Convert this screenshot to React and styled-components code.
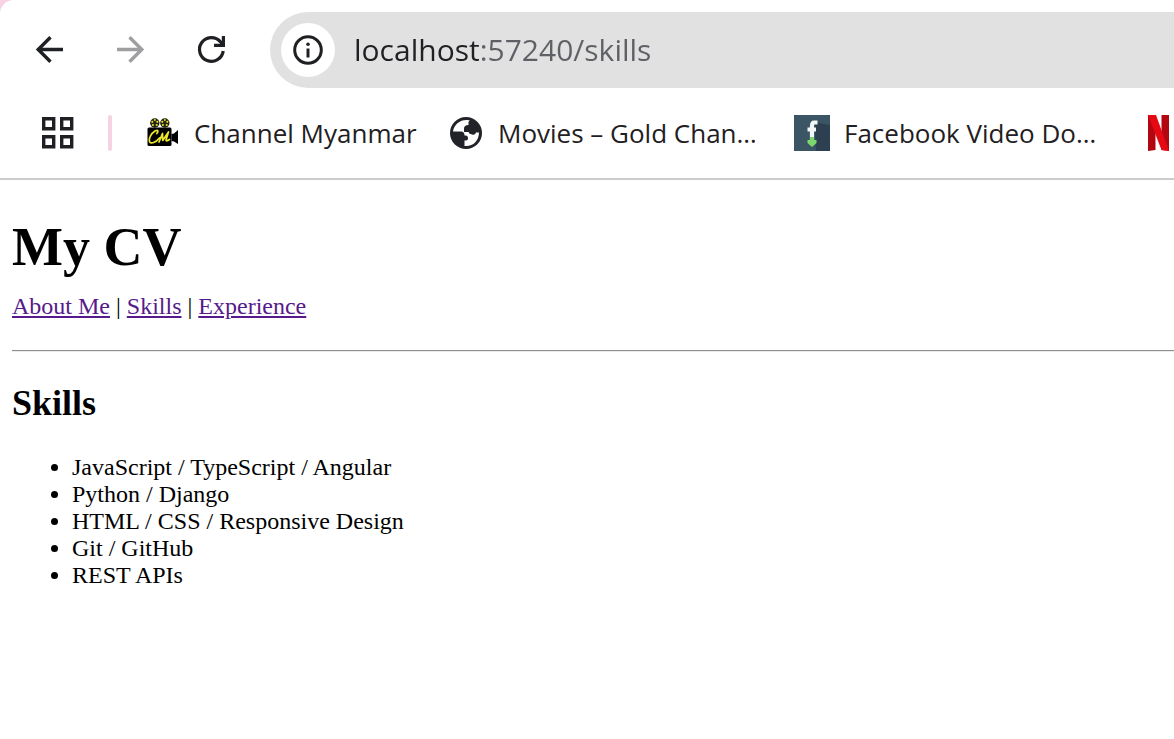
import React from "react";
import styled, { createGlobalStyle } from "styled-components";

const GlobalStyle = createGlobalStyle`
  *, *::before, *::after { box-sizing: border-box; }
  body { margin: 0; background: #f6d3e3; }
`;

const uiFont = `"Segoe UI", "Open Sans", "Noto Sans", sans-serif`;

const Browser = styled.div`
  min-height: 100vh;
  display: flex;
  flex-direction: column;
  overflow: hidden;
  background: #fff;
  border-top-left-radius: 14px;
`;

const Toolbar = styled.header`
  display: flex;
  align-items: center;
  padding: 12px 0 0 30px;
`;

const NavButtons = styled.div`
  display: flex;
  gap: 41px;
  margin-right: 38px;
`;

const IconButton = styled.button`
  width: 40px;
  height: 40px;
  flex: none;
  display: flex;
  padding: 0;
  border: 0;
  background: none;
  color: ${(p) => (p.disabled ? "#9f9fa1" : "#1f2023")};
`;

const AddressBar = styled.form`
  flex: 1;
  min-width: 0;
  height: 76px;
  display: flex;
  align-items: center;
  gap: 19px;
  padding-left: 11px;
  background: #e1e1e1;
  border-radius: 38px 0 0 38px;
`;

const SiteInfo = styled(IconButton)`
  width: 54px;
  height: 54px;
  border-radius: 50%;
  background: #fff;
`;

const AddressInput = styled.input`
  flex: 1;
  min-width: 0;
  height: 44px;
  padding: 0;
  border: 0;
  outline: 0;
  font: 30px/44px ${uiFont};
  color: transparent;
  caret-color: #1f2023;
  background: linear-gradient(90deg, #1f2023 125px, #5e6065 125px);
  background-clip: text;
  -webkit-background-clip: text;
`;

const BookmarksBar = styled.nav`
  height: 92px;
  display: flex;
  align-items: center;
  border-bottom: 2px solid #ccc;
  padding-left: 38px;
  white-space: nowrap;
`;

const Divider = styled.span`
  width: 4px;
  height: 36px;
  flex: none;
  margin: 0 32px 0 30px;
  border-radius: 2px;
  background: #f6d3e3;
`;

const Bookmarks = styled.div`
  display: flex;
  gap: 36px;
`;

const Bookmark = styled.a`
  flex: none;
  width: ${(p) => (p.$full ? "310px" : "268px")};
  display: flex;
  align-items: center;
  gap: 14px;
  font: 26px/36px ${uiFont};
  color: #1f2023;
  text-decoration: none;
`;

const Favicon = styled.svg`
  width: 36px;
  height: 36px;
  flex: none;
`;

const Page = styled.main`
  padding: 36px 0 24px 12px;
  font: 24px/27px "Times New Roman", "Liberation Serif", serif;
  color: #000;
`;

const Title = styled.h1`
  margin: 0 0 15px;
  font-size: 54px;
  line-height: 62px;
`;

const PageNav = styled.nav`
  a { color: #551a8b; }
`;

const Rule = styled.hr`
  height: 2px;
  margin: 30px 0;
  border: 0;
  border-top: 1px solid #8e8e8e;
  border-bottom: 1px solid #ececec;
`;

const SectionTitle = styled.h2`
  margin: 0 0 30px;
  font-size: 36px;
  line-height: 42px;
`;

const SkillList = styled.ul`
  margin: 0;
  padding-left: 60px;
`;

const Arrow = ({ flip }) => (
  <svg viewBox="0 0 40 40" width="40" height="40" fill="none" stroke="currentColor" strokeWidth="3.4" aria-hidden="true">
    <path d={flip ? "M6 19.5H31M18.500 7.2 30.800 19.5 18.500 31.8" : "M33 19.5H8M20.5 7.2 8.2 19.5 20.5 31.8"} />
  </svg>
);

const Reload = () => (
  <svg viewBox="0 0 40 40" width="40" height="40" fill="none" stroke="currentColor" strokeWidth="3.2" aria-hidden="true">
    <path d="M31.200 21A11.900 11.900 0 1 1 28.300 11.600L31 15" />
    <path d="M22 15.400H31.400V6" />
  </svg>
);

const Info = () => (
  <svg viewBox="0 0 54 54" width="54" height="54" fill="none" stroke="currentColor" strokeWidth="3" aria-hidden="true">
    <circle cx="27" cy="27" r="13.3" />
    <path d="M27 25.5V34.5" />
    <circle cx="27" cy="21.3" r="1.8" fill="currentColor" stroke="none" />
  </svg>
);

const Apps = () => (
  <svg viewBox="0 0 40 40" width="40" height="40" fill="none" stroke="currentColor" strokeWidth="3.4" aria-hidden="true">
    <path d="M5.7 5.7h10v10h-10zM23.7 5.7h10v10h-10zM5.7 23.7h10v10h-10zM23.7 23.7h10v10h-10z" />
  </svg>
);

const Reel = ({ cx }) => (
  <g>
    <circle cx={cx} cy="8" r="4.7" fill="#24240f" />
    <g fill="#dcd936">
      <circle cx={cx - 2.5} cy="6.8" r="1.1" />
      <circle cx={cx + 2.5} cy="6.8" r="1.1" />
      <circle cx={cx} cy="4.9" r="1" />
      <circle cx={cx - 1.9} cy="10" r="1.1" />
      <circle cx={cx + 1.9} cy="10" r="1.1" />
    </g>
  </g>
);

const CameraIcon = () => (
  <Favicon viewBox="0 0 36 36" aria-hidden="true">
    <Reel cx={10.8} />
    <Reel cx={20.8} />
    <rect x="3.5" y="12.5" width="24" height="18.5" rx="1.5" />
    <path d="M27.5 19 30 18.5 34 15V29L30 26.5 27.5 26z" />
    <g fill="none" stroke="#eee82a" strokeWidth="1.7" strokeLinecap="round" strokeLinejoin="round">
      <path d="M12.8 18.5C15 16 14 14.5 11 16 7 18.500 4.500 23.500 5.500 26.500 6.500 29.500 12 27.500 15.500 23" />
      <path d="M15 27 18.500 18.500 18.700 25.500 24.500 17 22 25Q22 27 25.500 24.500" />
    </g>
  </Favicon>
);

const GlobeIcon = () => (
  <Favicon viewBox="0 0 36 36" aria-hidden="true">
    <circle cx="18" cy="18" r="16" fill="#212328" />
    <path fill="#fff" d="M19.500 5C12 4.500 6 9.500 5 16.500H13Q16.500 16.500 16.500 20.500H17.500Q20 20.500 20 23.500Q20 25.500 17 25.500H16.500V31C24.500 32 31 26 31 17.500H28Q27 20.500 24 19.500Q21 19 20.500 17H16V13.500Q16 10 20.500 10V7.500Q20.500 6 22 5.500z" />
  </Favicon>
);

const VideoDownloadIcon = () => (
  <Favicon viewBox="0 0 36 36" aria-hidden="true">
    <rect width="36" height="36" fill="#3c5565" />
    <path fill="#2c4051" d="M20 7 36 10V36H22z" />
    <path fill="none" stroke="#f4f7f7" strokeWidth="4.200" d="M23.500 7.500H20Q18 7.500 18 11V25M13.500 14.500H22" />
    <path fill="#7bd86c" d="M16 22H20V25H22.500V28L18 32 13.500 28V25H16z" />
  </Favicon>
);

const NetflixIcon = () => (
  <Favicon viewBox="0 0 36 36" aria-hidden="true">
    <path fill="#b20710" d="M8 0H15.500V35L8 36zM21.500 0H29V36L21.500 35z" />
    <path fill="#e50914" d="M8 0H16L29 36 21.500 35z" />
  </Favicon>
);

const bookmarks = [
  { label: "Channel Myanmar", Icon: CameraIcon },
  { label: "Movies – Gold Chan…", Icon: GlobeIcon, full: true },
  { label: "Facebook Video Do…", Icon: VideoDownloadIcon, full: true },
  { label: "", name: "Netflix", Icon: NetflixIcon, full: true },
];

const skills = [
  "JavaScript / TypeScript / Angular",
  "Python / Django",
  "HTML / CSS / Responsive Design",
  "Git / GitHub",
  "REST APIs",
];

export default function App() {
  return (
    <Browser>
      <GlobalStyle />
      <Toolbar>
        <NavButtons>
          <IconButton aria-label="Back"><Arrow /></IconButton>
          <IconButton aria-label="Forward" disabled><Arrow flip /></IconButton>
          <IconButton aria-label="Reload"><Reload /></IconButton>
        </NavButtons>
        <AddressBar onSubmit={(e) => e.preventDefault()}>
          <SiteInfo type="button" aria-label="View site information"><Info /></SiteInfo>
          <AddressInput aria-label="Address" spellCheck={false} defaultValue="localhost:57240/skills" />
        </AddressBar>
      </Toolbar>
      <BookmarksBar aria-label="Bookmarks">
        <IconButton aria-label="Apps"><Apps /></IconButton>
        <Divider />
        <Bookmarks>
          {bookmarks.map(({ label, name, Icon, full }) => (
            <Bookmark key={label || name} href="#" $full={full} aria-label={name}>
              <Icon />
              {label}
            </Bookmark>
          ))}
        </Bookmarks>
      </BookmarksBar>
      <Page>
        <Title>My CV</Title>
        <PageNav aria-label="Sections">
          <a href="#about">About Me</a> | <a href="#skills">Skills</a> | <a href="#experience">Experience</a>
        </PageNav>
        <Rule />
        <SectionTitle>Skills</SectionTitle>
        <SkillList>
          {skills.map((skill) => <li key={skill}>{skill}</li>)}
        </SkillList>
      </Page>
    </Browser>
  );
}
